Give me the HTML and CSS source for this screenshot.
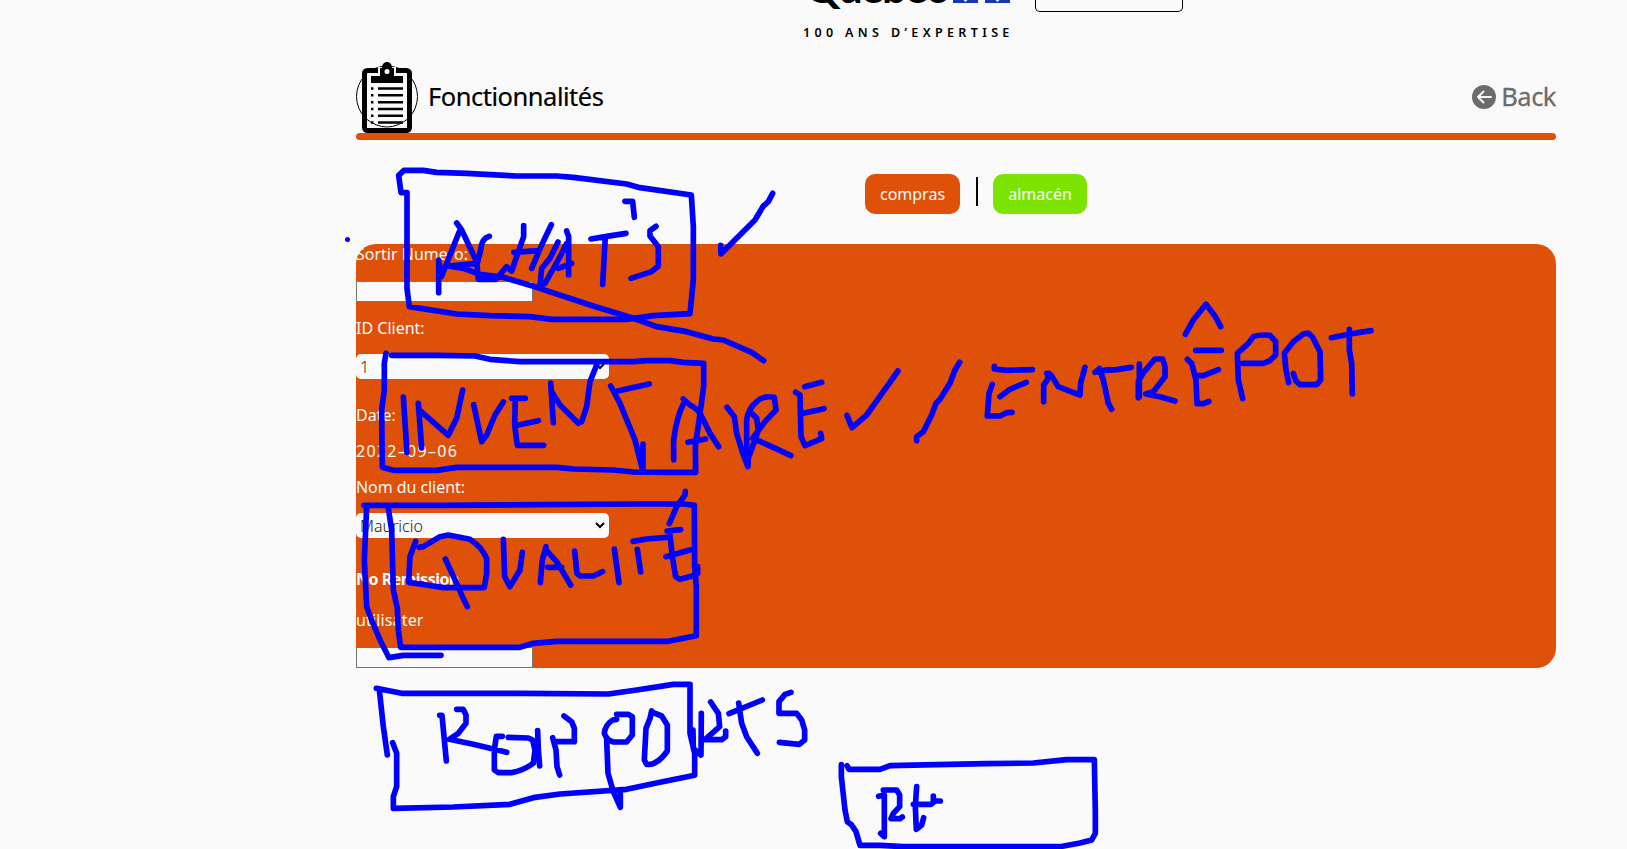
FILE: index.html
```html
<!DOCTYPE html>
<html lang="fr">
<head>
<meta charset="utf-8">
<title>Fonctionnalités</title>
<link rel="stylesheet" href="styles.css">
</head>
<body>
<header class="top">
  <div class="brand">
    <div class="brand-row">
      <span class="brand-name">Québec</span>
      <svg class="flags" width="58" height="26" viewBox="0 0 58 26"><path fill="#1438b4" d="M0 0h25v26H0zM32 0h25v26H32z"/><path fill="#fff" d="M12.500 25l-2-2 1-3h2l1 3zM6 21l2-1v3zM19 21l-2-1v3zM44.500 25l-2-2 1-3h2l1 3zM38 21l2-1v3zM51 21l-2-1v3z"/></svg>
    </div>
    <div class="tagline">100 ANS D’EXPERTISE</div>
  </div>
  <div class="top-box"></div>
</header>
<main class="page">
  <div class="title-bar">
    <svg class="clip" width="62" height="72" viewBox="0 0 62 72">
      <circle cx="31" cy="35.500" r="30.500" fill="none" stroke="#000"/>
      <rect x="8.500" y="9.500" width="45" height="60" rx="3" fill="#fafafa" stroke="#000" stroke-width="5"/>
      <path fill="#fafafa" d="M22 6h18v6H22z"/>
      <path d="M15 15h9V7h2c0-8 10-8 10 0h2v8h9v7H15z"/>
      <circle cx="31" cy="10.500" r="2.500" fill="#fff"/>
      <path stroke="#000" stroke-width="2.600" d="M22 27.500h25M22 34.300h25M22 41.200h25M22 48h25M22 54.800h25M22 61.500h25M15 27.500h2.400M15 34.300h2.400M15 41.200h2.400M15 48h2.400M15 54.800h2.400M15 61.500h2.400"/>
      <path d="M9 57q22 18 44 0" fill="none" stroke="#000"/>
    </svg>
    <h1 class="title">Fonctionnalités</h1>
    <a class="back">
      <svg width="24" height="24" viewBox="0 0 24 24"><circle cx="12" cy="12" r="12" fill="#6c6c6c"/><path d="M19 12H6M11.500 6.500L6 12l5.500 5.500" fill="none" stroke="#fafafa" stroke-width="2" stroke-linecap="round" stroke-linejoin="round"/></svg>
      <span class="back-text">Back</span>
    </a>
  </div>
  <div class="rule"></div>
  <nav class="tabs">
    <a class="tab tab-compras"><span>compras</span></a>
    <span class="sep"></span>
    <a class="tab tab-almacen"><span>almacén</span></a>
  </nav>
  <form class="card">
    <label class="l1">Sortir Numero:</label>
    <div class="field"></div>
    <label class="l2">ID Client:</label>
    <div class="select"><span>1</span><svg width="10" height="7" viewBox="0 0 10 7"><path d="M1 1l4 4 4-4" fill="none" stroke="#000" stroke-width="2"/></svg></div>
    <label class="l3">Date:</label>
    <div class="l4">2022–09–06</div>
    <label class="l5">Nom du client:</label>
    <div class="select"><span class="name">Mauricio</span><svg width="10" height="7" viewBox="0 0 10 7"><path d="M1 1l4 4 4-4" fill="none" stroke="#000" stroke-width="2"/></svg></div>
    <label class="l6">No Remission</label>
    <label class="l7">utilisater</label>
    <div class="field"></div>
  </form>
</main>
<svg class="ink" width="1627" height="849" viewBox="0 0 1627 849">
  <circle cx="347.500" cy="239.500" r="2.500" class="dot"/>
  <g transform="translate(340 160) scale(.33333)">
    <path d="M201 98V385L208 440 350 462 450 467 570 470 635 478H860L940 467 1050 461 1060 360V200L1054 105 900 83 860 72 700 52 650 48H530L380 40 290 37 250 31H192L176 46 183 98H201"/>
    <path d="M296 398V300L304 350 320 310 358 215M350 189L365 210 410 305 415 358H468L500 320M448 229Q425 235 422 270L412 310 325 318 370 325 420 343 490 352 590 382 750 435 880 475 950 500 1040 515 1120 537 1150 540 1235 577 1271 602"/>
    <path d="M551 197V230L530 290 515 333 505 325M522 277L595 272M634 194L605 255 575 325M654 246L630 295 605 325 600 378 615 370 660 290 680 250M680 213L686 230V345M655 325L695 310M753 237L800 229 858 220M796 230L788 373M855 124H878L883 172M948 199L930 212 930 228 955 260V318L935 335 873 355"/>
    <path d="M1142 256L1143 282 1175 250 1245 180 1270 138 1285 125 1298 100"/>
  </g>
  <g transform="translate(340 340) scale(.33333)">
    <path d="M138 40L133 70V150L125 210 127 382 160 391H290L350 382H650L700 387 820 390 880 396 970 397H1067L1066 320 1083 200 1091 140V70L1030 67 990 62H920L880 65H540L450 58 405 48 290 46H155"/>
    <path d="M190 171L201 337M235 190L245 323M236 208L325 286 350 235 368 150M401 194L425 305 440 285 465 225 490 186M515 175H556M526 177L524 255 532 316H611M535 255L595 242M632 129L640 248M635 155L660 195 715 250 725 245 740 200 750 125 770 75M812 138L840 190 885 300 909 395V312M833 153L870 145 928 132M1001 359V300Q1010 230 1031 190M1030 177L1050 195Q1070 205 1080 220L1110 280 1136 320M1044 307L1097 297"/>
    <path d="M1161 202L1183 230 1190 280 1210 345 1224 380 1225 355 1245 300 1255 270 1250 235 1235 220M1220 345V240Q1225 205 1250 185 1270 165 1303 172L1308 210 1275 245 1245 285 1238 295 1280 313 1353 347M1394 140L1445 127M1367 157L1380 165 1383 290 1395 317 1445 296 1442 280M1390 220L1452 206"/>
  </g>
  <g transform="translate(340 480) scale(.33333)">
    <path d="M80 80L73 240 80 380 95 420 120 480 147 533 190 526H303M72 76H305L880 72H1030L1063 76 1064 260 1069 320V467L985 484H650L580 490 540 502H182L175 450 172 385 160 330 155 150 145 85M1073 260V280"/>
    <path d="M227 184L210 230 206 307 260 315 310 323H433L440 280V235Q425 200 390 178 350 170 325 165L300 170 250 200 237 202M316 237L350 310 365 345 382 380M490 178L494 290 510 320 540 270 547 217M601 308L607 240 618 200M618 210L650 245 692 315M623 262H665M704 213L711 280 720 288H760L788 275M823 207L837 308M892 208L902 276M879 184L920 177 980 172M981 153L1022 149M990 165L997 230 1007 290 1020 298 1068 285M978 230L1050 210M1036 34L1035 45 1010 80 988 131"/>
  </g>
  <g transform="translate(360 670) scale(.33333)">
    <path d="M49 55L125 70H485L745 72 830 60 940 43H990V190L1004 250V316L900 337 800 358 600 372 520 383 450 403 280 411 100 415V380L110 350V250L98 218M58 60L70 170 82 255M999 180L1000 235 1023 255 1024 130"/>
    <path d="M239 136H246L259 273M290 118H310L318 135V160L295 190 268 208 340 223 440 247M427 199H409L403 240V300L415 308H455Q490 302 520 280L525 240 518 210 505 204 445 202M533 182L535 240 539 288M578 203L588 240 591 290 599 315M612 138L635 155 643 175V215H582M770 148L758 150Q735 165 733 190 740 210 760 216H800L817 195V140L805 133H770M740 210L744 310 760 365 781 412V372M875 123L870 145 858 175 853 270 860 283Q890 288 922 243V165L905 138 880 128"/>
    <path d="M1052 96L1075 130 1079 170 1045 200 1035 209H1085L1097 200V183M1107 131L1207 90M1136 99L1145 160 1160 200 1192 250M1293 67L1275 73 1257 95V130H1310L1325 150 1334 180V210L1318 223 1258 217"/>
  </g>
  <g transform="translate(820 290) scale(.33333)">
    <path d="M81 376L96 413 140 375 190 305 234 243M419 217L405 240 390 280 360 328 348 340 335 375 310 425 290 440V452M523 229V237L560 241 637 239M517 283L507 310 502 378H540L560 368 576 367M619 277L570 298 540 320M671 335V285L682 270 686 250M680 250L693 255 715 290 745 302 780 315 782 280 795 232M825 247L865 239M838 235L850 270 865 340 875 358"/>
  </g>
  <g transform="translate(1100 290) scale(.33333)">
    <path d="M-10 243L50 239 94 232M118 222V320M115 323V275L130 248 165 207H188L195 230V260L160 305 137 312 180 320 225 333M256 133L280 90 318 43 345 78 362 110M287 181H364M262 208L275 220 288 270 291 341H310L327 334M287 257H310L355 239M428 326L415 270 412 190 445 160 460 140Q480 133 510 136L527 155V195L510 212 490 220H428M566 278L558 240 553 190 580 155 610 132 625 129 638 142 660 185 662 270 650 284H600L587 272 580 250M694 143L750 132 813 122M748 118V180L755 220 757 312"/>
  </g>
  <g transform="translate(820 740) scale(.33333)">
    <path d="M64 74V110L75 210 82 245 95 255 108 275 120 316H180L250 320H720L780 309 815 300 826 280V215L823 59H740L640 69 500 71 350 74 210 77 180 88H87L81 77M176 169L193 165V290L182 280M190 150H230L239 165V200L220 220 213 236H240L247 231M290 140L286 200 289 268 305 255 311 233M280 193H333L345 183H361M340 168V185"/>
  </g>
</svg>
</body>
</html>
```
FILE: styles.css
```css
* { box-sizing: border-box; }
body {
  margin: 0;
  height: 849px;
  overflow: hidden;
  position: relative;
  background: #fafafa;
  color: #000;
  font: 16px/20px "Noto Sans", "Open Sans", sans-serif;
}
.top { display: flex; height: 62px; padding-left: 803px; gap: 24px; }
.brand { width: 208px; }
.brand-row { display: flex; align-items: flex-end; gap: 9px; height: 12px; padding-left: 2px; }
.brand-name {
  width: 139px;
  font: 700 44px/54px Lato, sans-serif;
  letter-spacing: -2.200px;
  white-space: nowrap;
  margin-bottom: -1px;
}
.flags { flex: none; margin-bottom: 9px; }
.tagline {
  margin-top: 12px;
  font-size: 12.500px;
  line-height: 17px;
  font-weight: 600;
  letter-spacing: 4.350px;
  white-space: nowrap;
}
.top-box { width: 148px; height: 12px; border: 1px solid #000; border-top: 0; border-radius: 0 0 5px 5px; }
.page { width: 1200px; margin-left: 356px; }
.title-bar { display: flex; align-items: center; height: 71px; }
.clip { flex: none; margin-top: -1px; }
.title { margin: 0 0 4px 10px; font-size: 25.500px; font-weight: 400; line-height: 32px; letter-spacing: -.48px; -webkit-text-stroke: .2px; }
.back { display: flex; align-items: center; gap: 5px; margin: 0 0 2px auto; color: #6c6c6c; }
.back-text { margin-bottom: 2px; font-size: 25.500px; line-height: 32px; letter-spacing: -.5px; -webkit-text-stroke: .3px; }
.rule { height: 7px; background: #df5109; border-radius: 4px; }
.tabs { display: flex; justify-content: center; align-items: center; height: 104px; padding: 4px 0 0 40px; }
.tab { display: flex; justify-content: center; align-items: center; height: 40px; border-radius: 10px; color: #fafafa; }
.tab-compras { width: 95px; background: #df5109; }
.tab-almacen { width: 94px; background: #7ce400; }
.sep { width: 2px; height: 29px; margin: 0 15px 5px 16px; background: #000; }
.card { display: flex; flex-direction: column; align-items: flex-start; height: 424px; background: #df5109; border-radius: 20px; color: #fafafa; }
.field { width: 177px; height: 21px; margin-top: 17px; background: #fafafa; border: 1px solid #767676; }
.select { display: flex; align-items: center; justify-content: space-between; width: 253px; height: 25px; margin-top: 16px; padding: 0 4px; border-radius: 5px; background: #fafafa; color: #222; font-weight: 300; }
.l2, .l4, .l5 { margin-top: 16px; }
.l4 { letter-spacing: 1.300px; }
.l5 { letter-spacing: -.06px; }
.l3 { margin-top: 26px; }
.l6 { margin-top: 31px; font-weight: 700; letter-spacing: -.5px; }
.l7 { margin-top: 21px; letter-spacing: .15px; }
.ink { position: absolute; left: 0; top: 0; pointer-events: none; }
.ink path { fill: none; stroke: #00f; stroke-width: 17; stroke-linecap: round; stroke-linejoin: round; }
.dot { fill: #00f; }
```
